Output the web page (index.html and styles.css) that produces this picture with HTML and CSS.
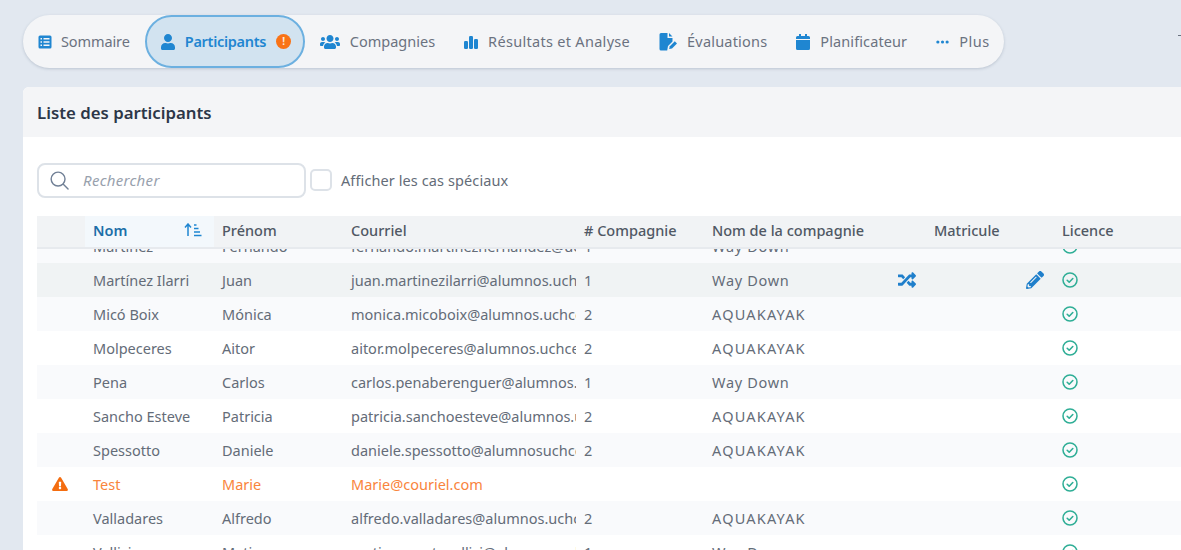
FILE: index.html
```html
<!DOCTYPE html>
<html lang="fr">
<head>
<meta charset="utf-8">
<title>Liste des participants</title>
<link rel="stylesheet" href="styles.css">
</head>
<body>
<svg class="defs" aria-hidden="true">
  <symbol id="i-user" viewBox="0 0 448 512"><path d="M224 256c70.7 0 128-57.3 128-128S294.7 0 224 0 96 57.3 96 128s57.3 128 128 128zm89.6 32h-16.7c-22.2 10.2-46.9 16-72.9 16s-50.6-5.8-72.9-16h-16.7C60.2 288 0 348.2 0 422.4V464c0 26.5 21.5 48 48 48h352c26.5 0 48-21.5 48-48v-41.6c0-74.2-60.2-134.4-134.4-134.4z"/></symbol>
  <symbol id="i-users" viewBox="0 0 640 512"><path d="M96 224c35.3 0 64-28.7 64-64s-28.7-64-64-64-64 28.7-64 64 28.7 64 64 64zm448 0c35.3 0 64-28.7 64-64s-28.7-64-64-64-64 28.7-64 64 28.7 64 64 64zm32 32h-64c-17.6 0-33.5 7.1-45.1 18.6 40.3 22.1 68.9 62 75.1 109.4h66c17.7 0 32-14.3 32-32v-32c0-35.3-28.7-64-64-64zm-256 0c61.9 0 112-50.1 112-112S381.9 32 320 32 208 82.1 208 144s50.1 112 112 112zm76.8 32h-8.3c-20.8 10-43.9 16-68.5 16s-47.6-6-68.5-16h-8.3C179.6 288 128 339.6 128 403.2V432c0 26.5 21.5 48 48 48h288c26.5 0 48-21.5 48-48v-28.8c0-63.6-51.6-115.2-115.2-115.2zm-223.7-13.4C161.5 263.1 145.6 256 128 256H64c-35.3 0-64 28.7-64 64v32c0 17.7 14.3 32 32 32h65.9c6.3-47.4 34.9-87.3 75.2-109.4z"/></symbol>
  <symbol id="i-random" viewBox="0 0 512 512"><path d="M504.971 359.029c9.373 9.373 9.373 24.569 0 33.941l-80 79.984c-15.01 15.01-40.971 4.49-40.971-16.971V416h-58.785a12.004 12.004 0 0 1-8.773-3.812l-70.556-75.596 53.333-57.143L352 336h32v-39.981c0-21.438 25.943-31.998 40.971-16.971l80 79.981zM12 176h84l52.781 56.551 53.333-57.143-70.556-75.596A11.999 11.999 0 0 0 122.785 96H12c-6.627 0-12 5.373-12 12v56c0 6.627 5.373 12 12 12zm372 0v39.984c0 21.46 25.961 31.98 40.971 16.971l80-79.984c9.373-9.373 9.373-24.569 0-33.941l-80-79.981C409.943 24.021 384 34.582 384 56.019V96h-58.785a12.004 12.004 0 0 0-8.773 3.812L96 336H12c-6.627 0-12 5.373-12 12v56c0 6.627 5.373 12 12 12h110.785c3.326 0 6.503-1.381 8.773-3.812L352 176h32z"/></symbol>
  <symbol id="i-pencil" viewBox="0 0 512 512"><path d="M497.9 142.1l-46.1 46.1c-4.7 4.7-12.3 4.7-17 0l-111-111c-4.7-4.7-4.7-12.3 0-17l46.1-46.1c18.7-18.7 49.1-18.7 67.9 0l60.1 60.1c18.8 18.7 18.8 49.1 0 67.9zM284.2 99.8L21.6 362.4.4 483.9c-2.9 16.4 11.4 30.6 27.8 27.8l121.5-21.3 262.6-262.6c4.7-4.7 4.7-12.3 0-17l-111-111c-4.8-4.7-12.4-4.7-17.1 0zM124.1 339.9c-5.5-5.5-5.5-14.3 0-19.8l154-154c5.5-5.5 14.3-5.5 19.8 0s5.5 14.3 0 19.8l-154 154c-5.5 5.5-14.3 5.5-19.8 0zM88 424h48v36.3l-64.5 11.3-31.1-31.1L51.7 376H88v48z"/></symbol>
  <symbol id="i-warn" viewBox="0 0 576 512"><path d="M569.517 440.013C587.975 472.007 564.806 512 527.94 512H48.054c-36.937 0-59.999-40.055-41.577-71.987L246.423 23.985c18.467-32.009 64.72-31.951 83.154 0l239.94 416.028zM288 354c-25.405 0-46 20.595-46 46s20.595 46 46 46 46-20.595 46-46-20.595-46-46-46zm-43.673-165.346l7.418 136c.347 6.364 5.609 11.346 11.982 11.346h48.546c6.373 0 11.635-4.982 11.982-11.346l7.418-136c.375-6.874-5.098-12.654-11.982-12.654h-63.383c-6.884 0-12.356 5.78-11.981 12.654z"/></symbol>
  <symbol id="i-check" viewBox="0 0 24 24"><circle cx="12" cy="12" r="10.500" fill="none" stroke="currentColor" stroke-width="2.300"/><path d="M7.800 12.400l3 3L16.200 9.800" fill="none" stroke="currentColor" stroke-width="2.400" stroke-linecap="round" stroke-linejoin="round"/></symbol>
</svg>

<nav class="topbar">
  <div class="tabs">
    <a class="tab tab-first"><svg class="ico ico-list" viewBox="0 0 14 14"><path fill-rule="evenodd" d="M2 .5h10A1.5 1.5 0 0 1 13.500 2v10a1.500 1.500 0 0 1-1.500 1.500H2A1.500 1.500 0 0 1 .5 12V2A1.500 1.500 0 0 1 2 .5zM2.500 3v1.500H4V3zm3 0v1.500h6V3zm-3 3.200v1.500H4V6.200zm3 0v1.500h6V6.200zm-3 3.200v1.500H4V9.400zm3 0v1.500h6V9.400z"/></svg>Sommaire</a>
    <a class="tab tab-active"><svg class="ico ico-user"><use href="#i-user"/></svg>Participants<span class="alert">!</span></a>
    <a class="tab"><svg class="ico ico-users"><use href="#i-users"/></svg>Compagnies</a>
    <a class="tab tab-results"><svg class="ico ico-bars" viewBox="0 0 14 14"><rect x="0" y="6" width="4" height="8" rx="1.200"/><rect x="5" y="1" width="4" height="13" rx="1.200"/><rect x="10" y="4" width="4" height="10" rx="1.200"/></svg>Résultats et Analyse</a>
    <a class="tab tab-eval"><svg class="ico ico-file" viewBox="0 0 18 18"><path d="M1.500 0H8v5h5v3.500L8.500 13l-.8 4.500H1.500A1.500 1.500 0 0 1 0 16V1.500A1.500 1.500 0 0 1 1.500 0zM9.500 0l3.500 3.600H9.500z"/><path d="M10.300 13.200l5-5 2.200 2.200-5 5-2.900.7z"/></svg>Évaluations</a>
    <a class="tab tab-plan"><svg class="ico ico-cal" viewBox="0 0 14 16"><path d="M3 0h2v2h4V0h2v2h1.500A1.500 1.500 0 0 1 14 3.500V5H0V3.500A1.500 1.500 0 0 1 1.500 2H3zM0 6h14v8.500a1.500 1.500 0 0 1-1.500 1.500h-11A1.500 1.500 0 0 1 0 14.500z"/></svg>Planificateur</a>
    <a class="tab tab-more"><svg class="ico ico-dots" viewBox="0 0 14 4"><circle cx="2" cy="2" r="1.700"/><circle cx="7" cy="2" r="1.700"/><circle cx="12" cy="2" r="1.700"/></svg>Plus</a>
  </div>
  <span class="stray"></span>
</nav>

<main class="card">
  <h1 class="card-title">Liste des participants</h1>
  <div class="card-body">
    <div class="filters">
      <label class="search">
        <svg class="search-ico" viewBox="0 0 20 20"><circle cx="8.500" cy="8.500" r="7.300"/><path d="M14 14l5 5"/></svg>
        <span class="search-ph">Rechercher</span>
      </label>
      <span class="checkbox"></span>
      <span class="check-label">Afficher les cas spéciaux</span>
    </div>

    <div class="table">
      <div class="row head">
        <span></span>
        <span class="sorted">Nom<svg class="sort-ico" viewBox="0 0 18 14"><path d="M4 13V2M1 4.500L4 1l3 3.500"/><path d="M10 2h2.500M10 5.500h4.500M10 9h6M10 12.500h7.500"/></svg></span>
        <span class="pad">Prénom</span>
        <span class="pad">Courriel</span>
        <span class="pad"># Compagnie</span>
        <span class="pad">Nom de la compagnie</span>
        <span></span>
        <span class="pad">Matricule</span>
        <span></span>
        <span class="pad">Licence</span>
      </div>
      <div class="rows">
        <div class="rows-inner">
          <div class="row odd">
            <span></span><span class="pad">Martínez</span><span class="pad">Fernando</span><span class="pad">fernando.martinezhernandez@uchceu.es</span><span class="pad">1</span><span class="pad co-way">Way Down</span><span></span><span></span><span></span><span class="pad"><svg class="ok"><use href="#i-check"/></svg></span>
          </div>
          <div class="row hover">
            <span></span><span class="pad">Martínez Ilarri</span><span class="pad">Juan</span><span class="pad">juan.martinezilarri@alumnos.uchceu.es</span><span class="pad">1</span><span class="pad co-way">Way Down</span>
            <span class="act"><svg class="act-ico"><use href="#i-random"/></svg></span><span></span>
            <span class="act"><svg class="act-ico"><use href="#i-pencil"/></svg></span><span class="pad"><svg class="ok"><use href="#i-check"/></svg></span>
          </div>
          <div class="row odd">
            <span></span><span class="pad">Micó Boix</span><span class="pad">Mónica</span><span class="pad">monica.micoboix@alumnos.uchceu.es</span><span class="pad">2</span><span class="pad co-aqua">AQUAKAYAK</span><span></span><span></span><span></span><span class="pad"><svg class="ok"><use href="#i-check"/></svg></span>
          </div>
          <div class="row">
            <span></span><span class="pad">Molpeceres</span><span class="pad">Aitor</span><span class="pad">aitor.molpeceres@alumnos.uchceu.es</span><span class="pad">2</span><span class="pad co-aqua">AQUAKAYAK</span><span></span><span></span><span></span><span class="pad"><svg class="ok"><use href="#i-check"/></svg></span>
          </div>
          <div class="row odd">
            <span></span><span class="pad">Pena</span><span class="pad">Carlos</span><span class="pad">carlos.penaberenguer@alumnos.uchceu.es</span><span class="pad">1</span><span class="pad co-way">Way Down</span><span></span><span></span><span></span><span class="pad"><svg class="ok"><use href="#i-check"/></svg></span>
          </div>
          <div class="row">
            <span></span><span class="pad">Sancho Esteve</span><span class="pad">Patricia</span><span class="pad">patricia.sanchoesteve@alumnos.uchceu.es</span><span class="pad">2</span><span class="pad co-aqua">AQUAKAYAK</span><span></span><span></span><span></span><span class="pad"><svg class="ok"><use href="#i-check"/></svg></span>
          </div>
          <div class="row odd">
            <span></span><span class="pad">Spessotto</span><span class="pad">Daniele</span><span class="pad">daniele.spessotto@alumnosuchceu.es</span><span class="pad">2</span><span class="pad co-aqua">AQUAKAYAK</span><span></span><span></span><span></span><span class="pad"><svg class="ok"><use href="#i-check"/></svg></span>
          </div>
          <div class="row warn">
            <span class="warn-cell"><svg class="warn-ico"><use href="#i-warn"/></svg></span><span class="pad">Test</span><span class="pad">Marie</span><span class="pad">Marie@couriel.com</span><span></span><span></span><span></span><span></span><span></span><span class="pad"><svg class="ok"><use href="#i-check"/></svg></span>
          </div>
          <div class="row odd">
            <span></span><span class="pad">Valladares</span><span class="pad">Alfredo</span><span class="pad">alfredo.valladares@alumnos.uchceu.es</span><span class="pad">2</span><span class="pad co-aqua">AQUAKAYAK</span><span></span><span></span><span></span><span class="pad"><svg class="ok"><use href="#i-check"/></svg></span>
          </div>
          <div class="row">
            <span></span><span class="pad">Vallicis</span><span class="pad">Matias</span><span class="pad">matias.montovallisi@alumnos.uchceu.es</span><span class="pad">1</span><span class="pad co-way">Way Down</span><span></span><span></span><span></span><span class="pad"><svg class="ok"><use href="#i-check"/></svg></span>
          </div>
        </div>
      </div>
    </div>
  </div>
</main>
</body>
</html>
```
FILE: styles.css
```css
* { box-sizing: border-box; }
html, body { height: 550px; overflow: hidden; }
body {
  margin: 0;
  padding: 15px 0 0 23px;
  background: #e2e8f0;
  font-family: "Noto Sans", "Open Sans", sans-serif;
  font-size: 14.5px;
  color: #646c78;
}
.defs { width: 0; height: 0; position: absolute; }

.topbar { display: flex; justify-content: space-between; height: 53px; }
.tabs {
  display: flex;
  align-items: center;
  gap: 29px;
  width: 981px;
  height: 53px;
  flex: none;
  background: #f4f5f7;
  border-radius: 27px;
  box-shadow: 0 1px 3px rgba(100, 116, 139, .3);
}
.tab { display: flex; align-items: center; white-space: nowrap; color: #6b7280; height: 53px; line-height: 51px; }
.tab-first { padding-left: 15px; letter-spacing: -.1px; }
.tab-first .ico { margin-right: 9px; }
.tab-results { letter-spacing: .3px; }
.tab-eval { letter-spacing: .2px; }
.tab-plan { letter-spacing: .1px; }
.tab-more { letter-spacing: .5px; }
.tab-active {
  width: 160px;
  padding-left: 14px;
  margin: 0 -14px;
  color: #1f86d1;
  font-weight: 600;
  letter-spacing: -.3px;
  background: #d2e3f0;
  border: 2px solid #6cb0e0;
  border-radius: 27px;
}
.ico { fill: #1f86d1; flex: none; margin-right: 10px; }
.ico-list { width: 14px; height: 14px; }
.ico-user { width: 14px; height: 16px; }
.ico-users { width: 20px; height: 16px; }
.ico-bars { width: 14px; height: 14px; }
.ico-file { width: 19px; height: 18px; margin-right: 9px; }
.ico-cal { width: 14px; height: 16px; }
.ico-dots { width: 13px; height: 4px; }
.alert {
  width: 15px;
  height: 15px;
  margin-left: 10px;
  border-radius: 50%;
  background: #f97316;
  color: #fde9d9;
  font-size: 10px;
  font-weight: 700;
  letter-spacing: 0;
  line-height: 15px;
  text-align: center;
}
.stray { width: 3px; height: 1px; margin-top: 20px; background: #6b7280; }

.card { margin-top: 19px; background: #fff; border-radius: 6px 0 0 0; height: 463px; overflow: hidden; }
.card-title {
  margin: 0;
  height: 50px;
  padding: 0 14px;
  background: #f4f5f7;
  color: #2d3748;
  font-size: 16.8px;
  font-weight: 600;
  line-height: 52px;
}
.card-body { padding: 26px 0 0 14px; }

.filters { display: flex; align-items: center; height: 34px; }
.search {
  display: flex;
  align-items: center;
  width: 269px;
  height: 35px;
  padding-left: 11px;
  background: #fff;
  border: 2px solid #dde2e8;
  border-radius: 8px;
}
.search-ico { width: 19px; height: 19px; fill: none; stroke: #718096; stroke-width: 1.500; stroke-linecap: round; }
.search-ph { margin-left: 14px; color: #98a1ad; font-style: italic; font-size: 15px; letter-spacing: .3px; }
.checkbox {
  width: 22px;
  height: 22px;
  margin-left: 4px;
  border: 2px solid #dde2e8;
  border-radius: 5px;
  background: #fff;
}
.check-label { margin-left: 9px; font-size: 14.5px; letter-spacing: .1px; }

.table { margin-top: 19px; }
.row {
  display: grid;
  grid-template-columns: 48px 129px 129px 233px 128px 194px 28px 100px 28px 140px;
  align-items: center;
  height: 34.05px;
  white-space: nowrap;
}
.row > span { overflow: hidden; }
.pad { padding-left: 8px; }
.co-aqua { letter-spacing: 1.2px; }
.co-way { letter-spacing: .7px; }
.head {
  height: 33px;
  padding-bottom: 4px;
  background: #f1f3f5;
  border-bottom: 2px solid #e7eaee;
  color: #505864;
  font-weight: 500;
}
.sorted {
  display: flex;
  align-items: center;
  justify-content: space-between;
  height: 31px;
  margin-bottom: -4px;
  padding: 0 12px 4px 8px;
  background: #f3f8fc;
  color: #1d6fa8;
  font-weight: 600;
}
.sort-ico { width: 18px; height: 14px; fill: none; stroke: #1f86d1; stroke-width: 1.500; }
.rows { height: 301px; overflow: hidden; }
.rows-inner { margin-top: -20px; }
.odd { background: #f9fafc; }
.hover { background: #f0f3f4; }
.warn { color: #f9843c; }
.warn-cell { display: flex; padding-left: 15px; }
.warn-ico { width: 16px; height: 14px; fill: #f46d10; }
.act { display: flex; }
.act-ico { width: 18px; height: 18px; fill: #1f7fcb; }
.ok { display: block; width: 16px; height: 16px; color: #2fae96; }
```
